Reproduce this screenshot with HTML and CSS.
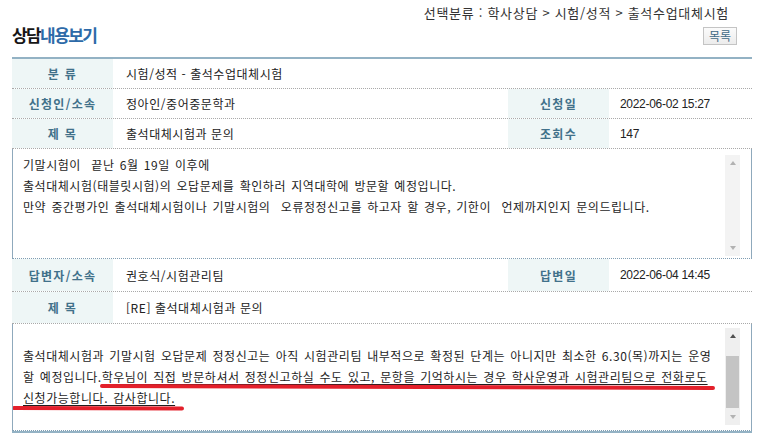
FILE: index.html
```html
<!DOCTYPE html>
<html lang="ko">
<head>
<meta charset="utf-8">
<title>상담내용보기</title>
<link rel="stylesheet" href="styles.css">
</head>
<body>
<div class="page">
  <header class="head">
    <div class="crumb">선택분류 : 학사상담 &gt; 시험/성적 &gt; 출석수업대체시험</div>
    <div class="head-row">
      <h1 class="title"><span class="t1">상담</span><span class="t2">내용보기</span></h1>
      <button class="btn" type="button">목록</button>
    </div>
  </header>

  <section class="board">
    <div class="row">
      <div class="lab">분 류</div>
      <div class="val span3">시험/성적 - 출석수업대체시험</div>
    </div>
    <div class="row">
      <div class="lab">신청인/소속</div>
      <div class="val">정아인/중어중문학과</div>
      <div class="lab">신청일</div>
      <div class="val num">2022-06-02 15:27</div>
    </div>
    <div class="row">
      <div class="lab">제 목</div>
      <div class="val">출석대체시험과 문의</div>
      <div class="lab">조회수</div>
      <div class="val num">147</div>
    </div>
    <div class="box box-q">
      <div class="text q">
        <div class="ln">기말시험이  끝난 6월 19일 이후에</div>
        <div class="ln">출석대체시험(태블릿시험)의 오답문제를 확인하러 지역대학에 방문할 예정입니다.</div>
        <div class="ln">만약 중간평가인 출석대체시험이나 기말시험의  오류정정신고를 하고자 할 경우, 기한이  언제까지인지 문의드립니다.</div>
      </div>
      <div class="sb sb-q">
        <div class="arr"><span class="tri up light"></span></div>
        <div class="track"></div>
        <div class="arr"><span class="tri down light"></span></div>
      </div>
    </div>

    <div class="row arow">
      <div class="lab">답변자/소속</div>
      <div class="val">권호식/시험관리팀</div>
      <div class="lab">답변일</div>
      <div class="val num">2022-06-04 14:45</div>
    </div>
    <div class="row arow2">
      <div class="lab">제 목</div>
      <div class="val span3">[RE] 출석대체시험과 문의</div>
    </div>
    <div class="box box-a">
      <div class="text a">
        <div class="ln">출석대체시험과 기말시험 오답문제 정정신고는 아직 시험관리팀 내부적으로 확정된 단계는 아니지만 최소한 6.30(목)까지는 운영</div>
        <div class="ln">할 예정입니다.<span class="ul">학우님이 직접 방문하셔서 정정신고하실 수도 있고, 문항을 기억하시는 경우 학사운영과 시험관리팀으로 전화로도</span></div>
        <div class="ln"><span class="ul">신청가능합니다. 감사합니다.</span></div>
      </div>
      <div class="sb sb-a">
        <div class="arr"><span class="tri up dark"></span></div>
        <div class="track"><div class="thumb"></div></div>
        <div class="arr"><span class="tri down light"></span></div>
      </div>
      <svg class="marks" width="738" height="106" viewBox="0 0 738 106">
        <line x1="89" y1="62" x2="700" y2="64" />
        <line x1="1" y1="84" x2="169" y2="84.5" />
      </svg>
    </div>
  </section>
</div>
</body>
</html>
```

FILE: styles.css
```css
* { box-sizing: border-box; }

html, body {
  margin: 0;
  padding: 0;
  background: #ffffff;
}

body {
  font-family: "Noto Sans CJK KR", "Noto Sans", sans-serif;
  font-size: 12px;
  color: #222222;
}

.page {
  width: 740px;
  margin-left: 12px;
}

/* header */
.head {
  height: 57px;
  display: flex;
  flex-direction: column;
}

.crumb {
  margin-top: 5px;
  height: 16px;
  line-height: 16px;
  font-size: 13px;
  letter-spacing: 0.7px;
  text-align: right;
  padding-right: 23px;
  color: #333333;
}

.head-row {
  display: flex;
  justify-content: space-between;
  align-items: flex-start;
  height: 36px;
}

.title {
  margin: 4px 0 0 0;
  font-size: 17px;
  line-height: 20px;
  font-weight: 700;
  letter-spacing: -1.6px;
}

.t1 { color: #161616; }
.t2 { color: #2d6aa8; }

.btn {
  margin: 6px 15px 0 0;
  height: 18px;
  width: 34px;
  padding: 0;
  font-family: inherit;
  font-size: 12px;
  line-height: 16px;
  color: #3f6a86;
  background: linear-gradient(#fbfbfb, #ececec);
  border: 1px solid #c4c4c4;
  border-radius: 0;
}

/* board */
.board {
  border-top: 2px solid #93b2c4;
  border-bottom: 2px solid #93b2c4;
}

.row {
  display: grid;
  grid-template-columns: 101px 395px 101px 1fr;
  height: 30px;
  border-bottom: 1px dotted #a9a9a9;
}

.row.arow { height: 33px; }
.row.arow2 { height: 32px; }

.lab {
  background: #eef6f6;
  color: #41718a;
  font-weight: 700;
  letter-spacing: 1.3px;
  display: flex;
  align-items: center;
  justify-content: center;
}

.val {
  display: flex;
  align-items: center;
  padding-left: 13px;
  color: #222222;
  letter-spacing: 0.55px;
}

.val.num {
  font-family: "Liberation Sans", "Noto Sans CJK KR", sans-serif;
  letter-spacing: -0.3px;
  padding-left: 11px;
}

.val.span3 { grid-column: 2 / 5; }

.box {
  position: relative;
  display: flex;
  height: 107px;
  border-left: 1px solid #8fa9bc;
  border-right: 1px solid #8fa9bc;
  border-bottom: 1px dotted #7f9db2;
}

.box.box-q { height: 110px; }

.text {
  flex: 1;
  padding: 5px 10px 0 10px;
  line-height: 21px;
  color: #1e1e1e;
  letter-spacing: 0.55px;
}

.text.a { padding-top: 21px; }

.ln {
  white-space: pre;
  word-spacing: 1.3px;
}

.ul {
  text-decoration: underline;
  text-underline-offset: 2px;
  text-decoration-thickness: 1px;
}

/* fake scrollbar */
.sb {
  width: 15px;
  margin: 6px 11px 2px 0;
  display: flex;
  flex-direction: column;
  background: #f3f3f3;
}

.sb-a {
  margin: 4px 11px 5px 0;
  background: #efefef;
}

.arr {
  height: 16px;
  display: flex;
  align-items: center;
  justify-content: center;
}

.track {
  flex: 1;
  display: flex;
  flex-direction: column;
}

.thumb {
  margin: 12px 1px 0 1px;
  height: 52px;
  background: #c4c4c4;
}

.tri {
  width: 0;
  height: 0;
  border-left: 3.5px solid transparent;
  border-right: 3.5px solid transparent;
}

.tri.up.light { border-bottom: 4px solid #b2b2b2; }
.tri.up.dark { border-bottom: 4px solid #505050; }
.tri.down.light { border-top: 4px solid #b2b2b2; }

/* red annotation strokes */
.marks {
  position: absolute;
  left: 0;
  top: 0;
  pointer-events: none;
}

.marks line {
  stroke: #e3202b;
  stroke-width: 4;
  stroke-linecap: round;
}
```
